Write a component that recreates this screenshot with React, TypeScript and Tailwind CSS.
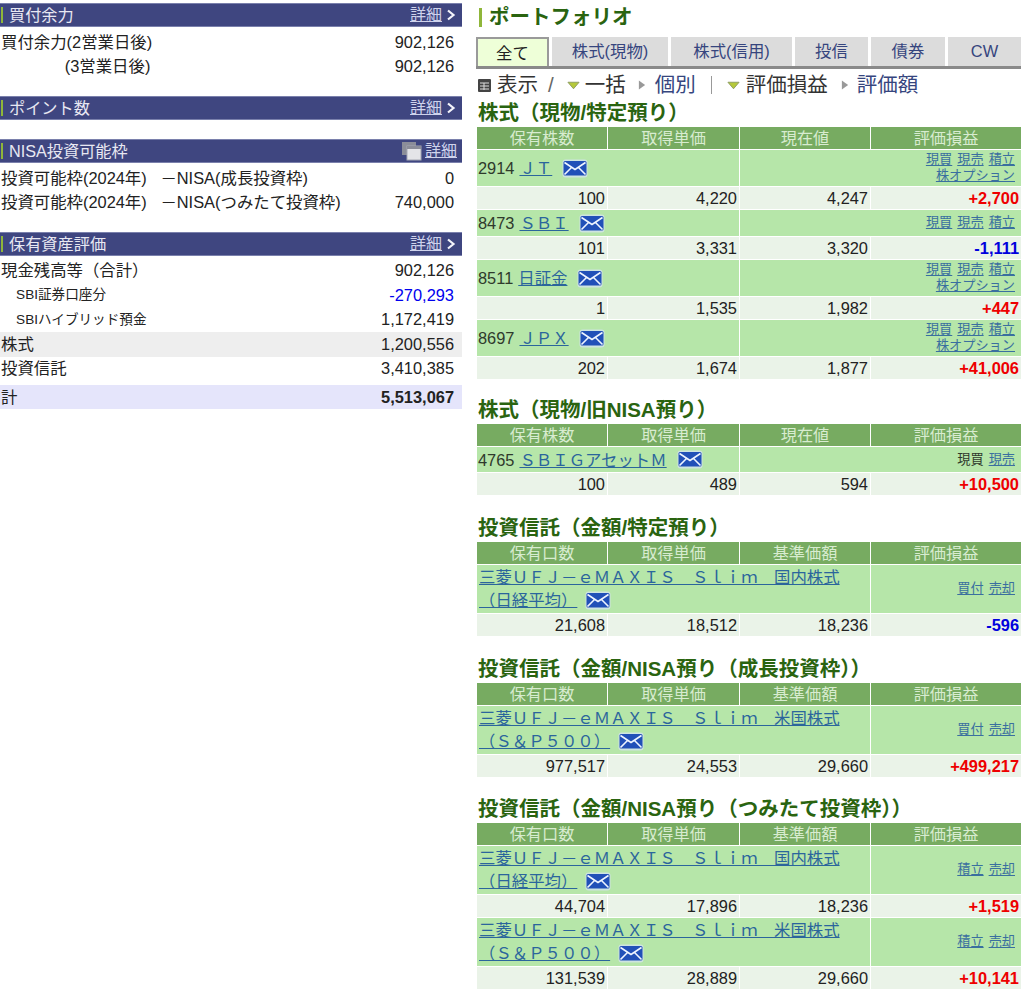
import React from "react";

const FONT = { fontFamily: '"Liberation Sans","Noto Sans CJK JP",sans-serif' };

function Mail() {
  return (
    <svg width="26" height="19" viewBox="0 0 26 19" className="inline-block shrink-0 align-middle">
      <rect x="0.5" y="0.5" width="25" height="18" rx="3" fill="#d5e3ee" opacity="0.8" />
      <rect x="1.5" y="2" width="23" height="14.5" rx="1.5" fill="#2150b8" />
      <path d="M2.5 3.5 L13 10.5 L23.5 3.5 M2.5 15.5 L9.5 8.5 M23.5 15.5 L16.5 8.5" fill="none" stroke="#eef4ff" strokeWidth="1.6" />
    </svg>
  );
}

function Bar({ title, mt, copy }: { title: string; mt: string; copy?: boolean }) {
  return (
    <div className={`flex h-[24px] items-center justify-between border-y border-[#7a80ac] bg-[#3f4680] ${mt}`}>
      <div className="flex items-center text-[16.2px] text-[#e8e8f2]">
        <span className="ml-[1px] mr-[6px] h-[16px] w-[2px] bg-[#8fb63a]" />
        {title}
      </div>
      {copy ? (
        <div className="flex items-center pr-[5px] text-[16px]">
          <svg width="22" height="20" viewBox="0 0 22 20" className="mr-[2px]">
            <rect x="1" y="1" width="14" height="13" fill="#8b8d99" />
            <rect x="6" y="5" width="14" height="14" fill="#e4e4e8" stroke="#a5a7b3" />
            <rect x="6" y="5" width="14" height="3" fill="#8b8d99" />
          </svg>
          <span className="text-[#cfd3ec] underline">詳細</span>
        </div>
      ) : (
        <div className="flex items-center pr-[6px] text-[16px]">
          <span className="text-[#cfd3ec] underline">詳細</span>
          <svg width="10" height="12" viewBox="0 0 10 12" className="ml-[4px]">
            <path d="M2 1.5 L7.5 6 L2 10.5" fill="none" stroke="#f4f4fa" strokeWidth="2.2" />
          </svg>
        </div>
      )}
    </div>
  );
}

function LeftRow({ label, value, cls = "", small, valueCls = "", h = "h-[24.5px]" }: { label: string; value: string; cls?: string; small?: boolean; valueCls?: string; h?: string }) {
  return (
    <div className={`flex items-center justify-between pl-[1px] pr-[8px] text-[#222] ${h} ${cls}`}>
      <span className={`whitespace-pre ${small ? "text-[13.6px]" : "text-[16.4px]"}`}>{label}</span>
      <span className={`text-[16.4px] ${valueCls}`}>{value}</span>
    </div>
  );
}

const GRID = "grid grid-cols-[130px_131px_130px_150px] gap-x-[1px]";

function Head({ cols }: { cols: string[] }) {
  return (
    <div className={`${GRID} h-[22px]`}>
      {cols.map((c) => (
        <div key={c} className="flex items-center justify-center bg-[#77ab61] text-[16.2px] leading-[20px] text-[#d8ecd0]">{c}</div>
      ))}
    </div>
  );
}

function Actions({ lines, plain }: { lines: string[][]; plain?: string }) {
  return (
    <div className="flex flex-col items-end justify-center pr-[6px] text-[13.2px] leading-[16px] text-[#3a6f9f]">
      {lines.map((l, i) => (
        <div key={i} className="flex gap-[5px]">
          {l.map((a) => (
            <span key={a} className={a === plain ? "text-[#2f3a2c]" : "underline"}>{a}</span>
          ))}
        </div>
      ))}
    </div>
  );
}

function Values({ v, gain }: { v: string[]; gain: string }) {
  const color = gain.startsWith("+") ? "text-[#ee0000]" : "text-[#0000dd]";
  return (
    <div className={`${GRID} mt-[1px] h-[22px] text-[16.4px] leading-[20px] text-[#222]`}>
      {v.map((x, i) => (
        <div key={i} className="flex items-center justify-end bg-[#eaf3e8] pr-[2px]">{x}</div>
      ))}
      <div className={`flex items-center justify-end bg-[#eaf3e8] pr-[2px] font-bold ${color}`}>{gain}</div>
    </div>
  );
}

function Stock({ code, name, actions, plain, v, gain, h }: { code: string; name: string; actions: string[][]; plain?: string; v: string[]; gain: string; h: string }) {
  return (
    <>
      <div className={`${GRID} ${h} mt-[1px]`}>
        <div className="col-span-2 flex items-center gap-[10px] bg-[#b6e6a9] pl-[1px] text-[16.4px] leading-[20px] text-[#2f3a2c]">
          <span className="flex items-center gap-[5px]">
            {code}
            <span className="text-[#2b659c] underline">{name}</span>
          </span>
          <Mail />
        </div>
        <div className="col-span-2 flex justify-end bg-[#b6e6a9]">
          <Actions lines={actions} plain={plain} />
        </div>
      </div>
      <Values v={v} gain={gain} />
    </>
  );
}

function Fund({ l1, l2, actions, v, gain }: { l1: string; l2: string; actions: string[]; v: string[]; gain: string }) {
  return (
    <>
      <div className={`${GRID} mt-[1px] h-[48px]`}>
        <div className="col-span-3 flex flex-col justify-center bg-[#b6e6a9] pl-[2px] text-[16.4px] leading-[23px] text-[#2b659c]">
          <div className="whitespace-pre underline">{l1}</div>
          <div className="flex items-center gap-[8px] whitespace-pre">
            <span className="underline">{l2}</span>
            <Mail />
          </div>
        </div>
        <div className="flex justify-end bg-[#b6e6a9]">
          <Actions lines={[actions]} />
        </div>
      </div>
      <Values v={v} gain={gain} />
    </>
  );
}

function Title({ t, mt }: { t: string; mt: string }) {
  return <div className={`mb-[2px] pl-[1px] text-[20.5px] font-bold leading-[24px] text-[#2a6410] ${mt}`}>{t}</div>;
}

const STOCK_HEAD = ["保有株数", "取得単価", "現在値", "評価損益"];
const FUND_HEAD = ["保有口数", "取得単価", "基準価額", "評価損益"];
const L1 = "三菱ＵＦＪ－ｅＭＡＸＩＳ　Ｓｌｉｍ　国内株式";
const L1US = "三菱ＵＦＪ－ｅＭＡＸＩＳ　Ｓｌｉｍ　米国株式";
const FULL = [["現買", "現売", "積立"], ["株オプション"]];

export default function App() {
  return (
    <div className="flex h-[998px] w-[1024px] gap-[14px] overflow-hidden bg-white" style={FONT}>
      <div className="w-[462px] shrink-0 pt-[3px]">
        <Bar title="買付余力" mt="" />
        <div className="pt-[3px]">
          <LeftRow label="買付余力(2営業日後)" value="902,126" />
          <LeftRow label="              (3営業日後)" value="902,126" />
        </div>
        <Bar title="ポイント数" mt="mt-[17px]" />
        <Bar title="NISA投資可能枠" copy mt="mt-[19px]" />
        <div className="pt-[3px]">
          <LeftRow label="投資可能枠(2024年)   －NISA(成長投資枠)" value="0" />
          <LeftRow label="投資可能枠(2024年)   －NISA(つみたて投資枠)" value="740,000" />
        </div>
        <Bar title="保有資産評価" mt="mt-[17px]" />
        <div className="pt-[2.5px]">
          <LeftRow label="現金残高等（合計）" value="902,126" />
          <LeftRow label="    SBI証券口座分" small value="-270,293" valueCls="text-[#0000ee]" />
          <LeftRow label="    SBIハイブリッド預金" small value="1,172,419" />
          <LeftRow label="株式" value="1,200,556" cls="bg-[#eeeeee]" />
          <LeftRow label="投資信託" value="3,410,385" />
          <LeftRow label="計" value="5,513,067" cls="mt-[4px] bg-[#e5e5fb]" valueCls="font-bold" h="h-[24px]" />
        </div>
      </div>

      <div className="w-[545px] shrink-0">
        <div className="flex h-[34px] items-center pl-[3px] text-[20.5px] font-bold text-[#2a6410]">
          <span className="mr-[7px] h-[19px] w-[3px] bg-[#8fb63a]" />
          ポートフォリオ
        </div>
        <div className="mt-[3px] flex h-[32px] items-stretch gap-[3px] border-b-[3px] border-[#8a8a8a] text-[16.4px] text-[#36457e]">
          <div className="flex w-[73px] items-center justify-center border-2 border-b-0 border-[#9a9a9a] bg-[#eeffd8] pt-[2px] text-[#222]">全て</div>
          <div className="flex w-[116px] items-center justify-center bg-[#dcdcdc]">株式(現物)</div>
          <div className="flex w-[121px] items-center justify-center bg-[#dcdcdc]">株式(信用)</div>
          <div className="flex w-[73px] items-center justify-center bg-[#dcdcdc]">投信</div>
          <div className="flex w-[74px] items-center justify-center bg-[#dcdcdc]">債券</div>
          <div className="flex w-[73px] items-center justify-center bg-[#dcdcdc]">CW</div>
        </div>
        <div className="flex h-[30px] items-center pl-[1px] pt-[2px] text-[20.5px] text-[#333]">
          <svg width="15" height="15" viewBox="0 0 15 15" className="mr-[5px]">
            <rect x="1" y="1" width="13" height="13" rx="1" fill="#444" />
            <path d="M3 5h9M3 8h9M3 11h9M7 5v7" stroke="#ddd" strokeWidth="1" />
          </svg>
          <span>表示</span>
          <span className="ml-[10px] mr-[13px] text-[#666]">/</span>
          <svg width="13" height="9" viewBox="0 0 14 9" className="mr-[5px]"><path d="M1 1h12L7 8z" fill="#b5c83a" stroke="#8a9a60" /></svg>
          <span>一括</span>
          <svg width="8" height="12" viewBox="0 0 9 12" className="ml-[12px] mr-[9px]"><path d="M1 1l7 5-7 5z" fill="#999" /></svg>
          <span className="text-[#36457e]">個別</span>
          <span className="mx-[15px] h-[18px] w-[1px] bg-[#999]" />
          <svg width="13" height="9" viewBox="0 0 14 9" className="mr-[6px]"><path d="M1 1h12L7 8z" fill="#b5c83a" stroke="#8a9a60" /></svg>
          <span>評価損益</span>
          <svg width="8" height="12" viewBox="0 0 9 12" className="ml-[13px] mr-[8px]"><path d="M1 1l7 5-7 5z" fill="#999" /></svg>
          <span className="text-[#36457e]">評価額</span>
        </div>

        <div className="pl-[1px]">
          <Title t="株式（現物/特定預り）" mt="mt-[2px]" />
          <Head cols={STOCK_HEAD} />
          <Stock code="2914" name="ＪＴ" actions={FULL} v={["100", "4,220", "4,247"]} gain="+2,700" h="h-[36px]" />
          <Stock code="8473" name="ＳＢＩ" actions={[["現買", "現売", "積立"]]} v={["101", "3,331", "3,320"]} gain="-1,111" h="h-[26px]" />
          <Stock code="8511" name="日証金" actions={FULL} v={["1", "1,535", "1,982"]} gain="+447" h="h-[36px]" />
          <Stock code="8697" name="ＪＰＸ" actions={FULL} v={["202", "1,674", "1,877"]} gain="+41,006" h="h-[36px]" />

          <Title t="株式（現物/旧NISA預り）" mt="mt-[19px]" />
          <Head cols={STOCK_HEAD} />
          <Stock code="4765" name="ＳＢＩＧアセットＭ" actions={[["現買", "現売"]]} plain="現買" v={["100", "489", "594"]} gain="+10,500" h="h-[25px]" />

          <Title t="投資信託（金額/特定預り）" mt="mt-[21px]" />
          <Head cols={FUND_HEAD} />
          <Fund l1={L1} l2="（日経平均）" actions={["買付", "売却"]} v={["21,608", "18,512", "18,236"]} gain="-596" />

          <Title t="投資信託（金額/NISA預り（成長投資枠））" mt="mt-[21px]" />
          <Head cols={FUND_HEAD} />
          <Fund l1={L1US} l2="（Ｓ＆Ｐ５００）" actions={["買付", "売却"]} v={["977,517", "24,553", "29,660"]} gain="+499,217" />

          <Title t="投資信託（金額/NISA預り（つみたて投資枠））" mt="mt-[20px]" />
          <Head cols={FUND_HEAD} />
          <Fund l1={L1} l2="（日経平均）" actions={["積立", "売却"]} v={["44,704", "17,896", "18,236"]} gain="+1,519" />
          <Fund l1={L1US} l2="（Ｓ＆Ｐ５００）" actions={["積立", "売却"]} v={["131,539", "28,889", "29,660"]} gain="+10,141" />
        </div>
      </div>
    </div>
  );
}
